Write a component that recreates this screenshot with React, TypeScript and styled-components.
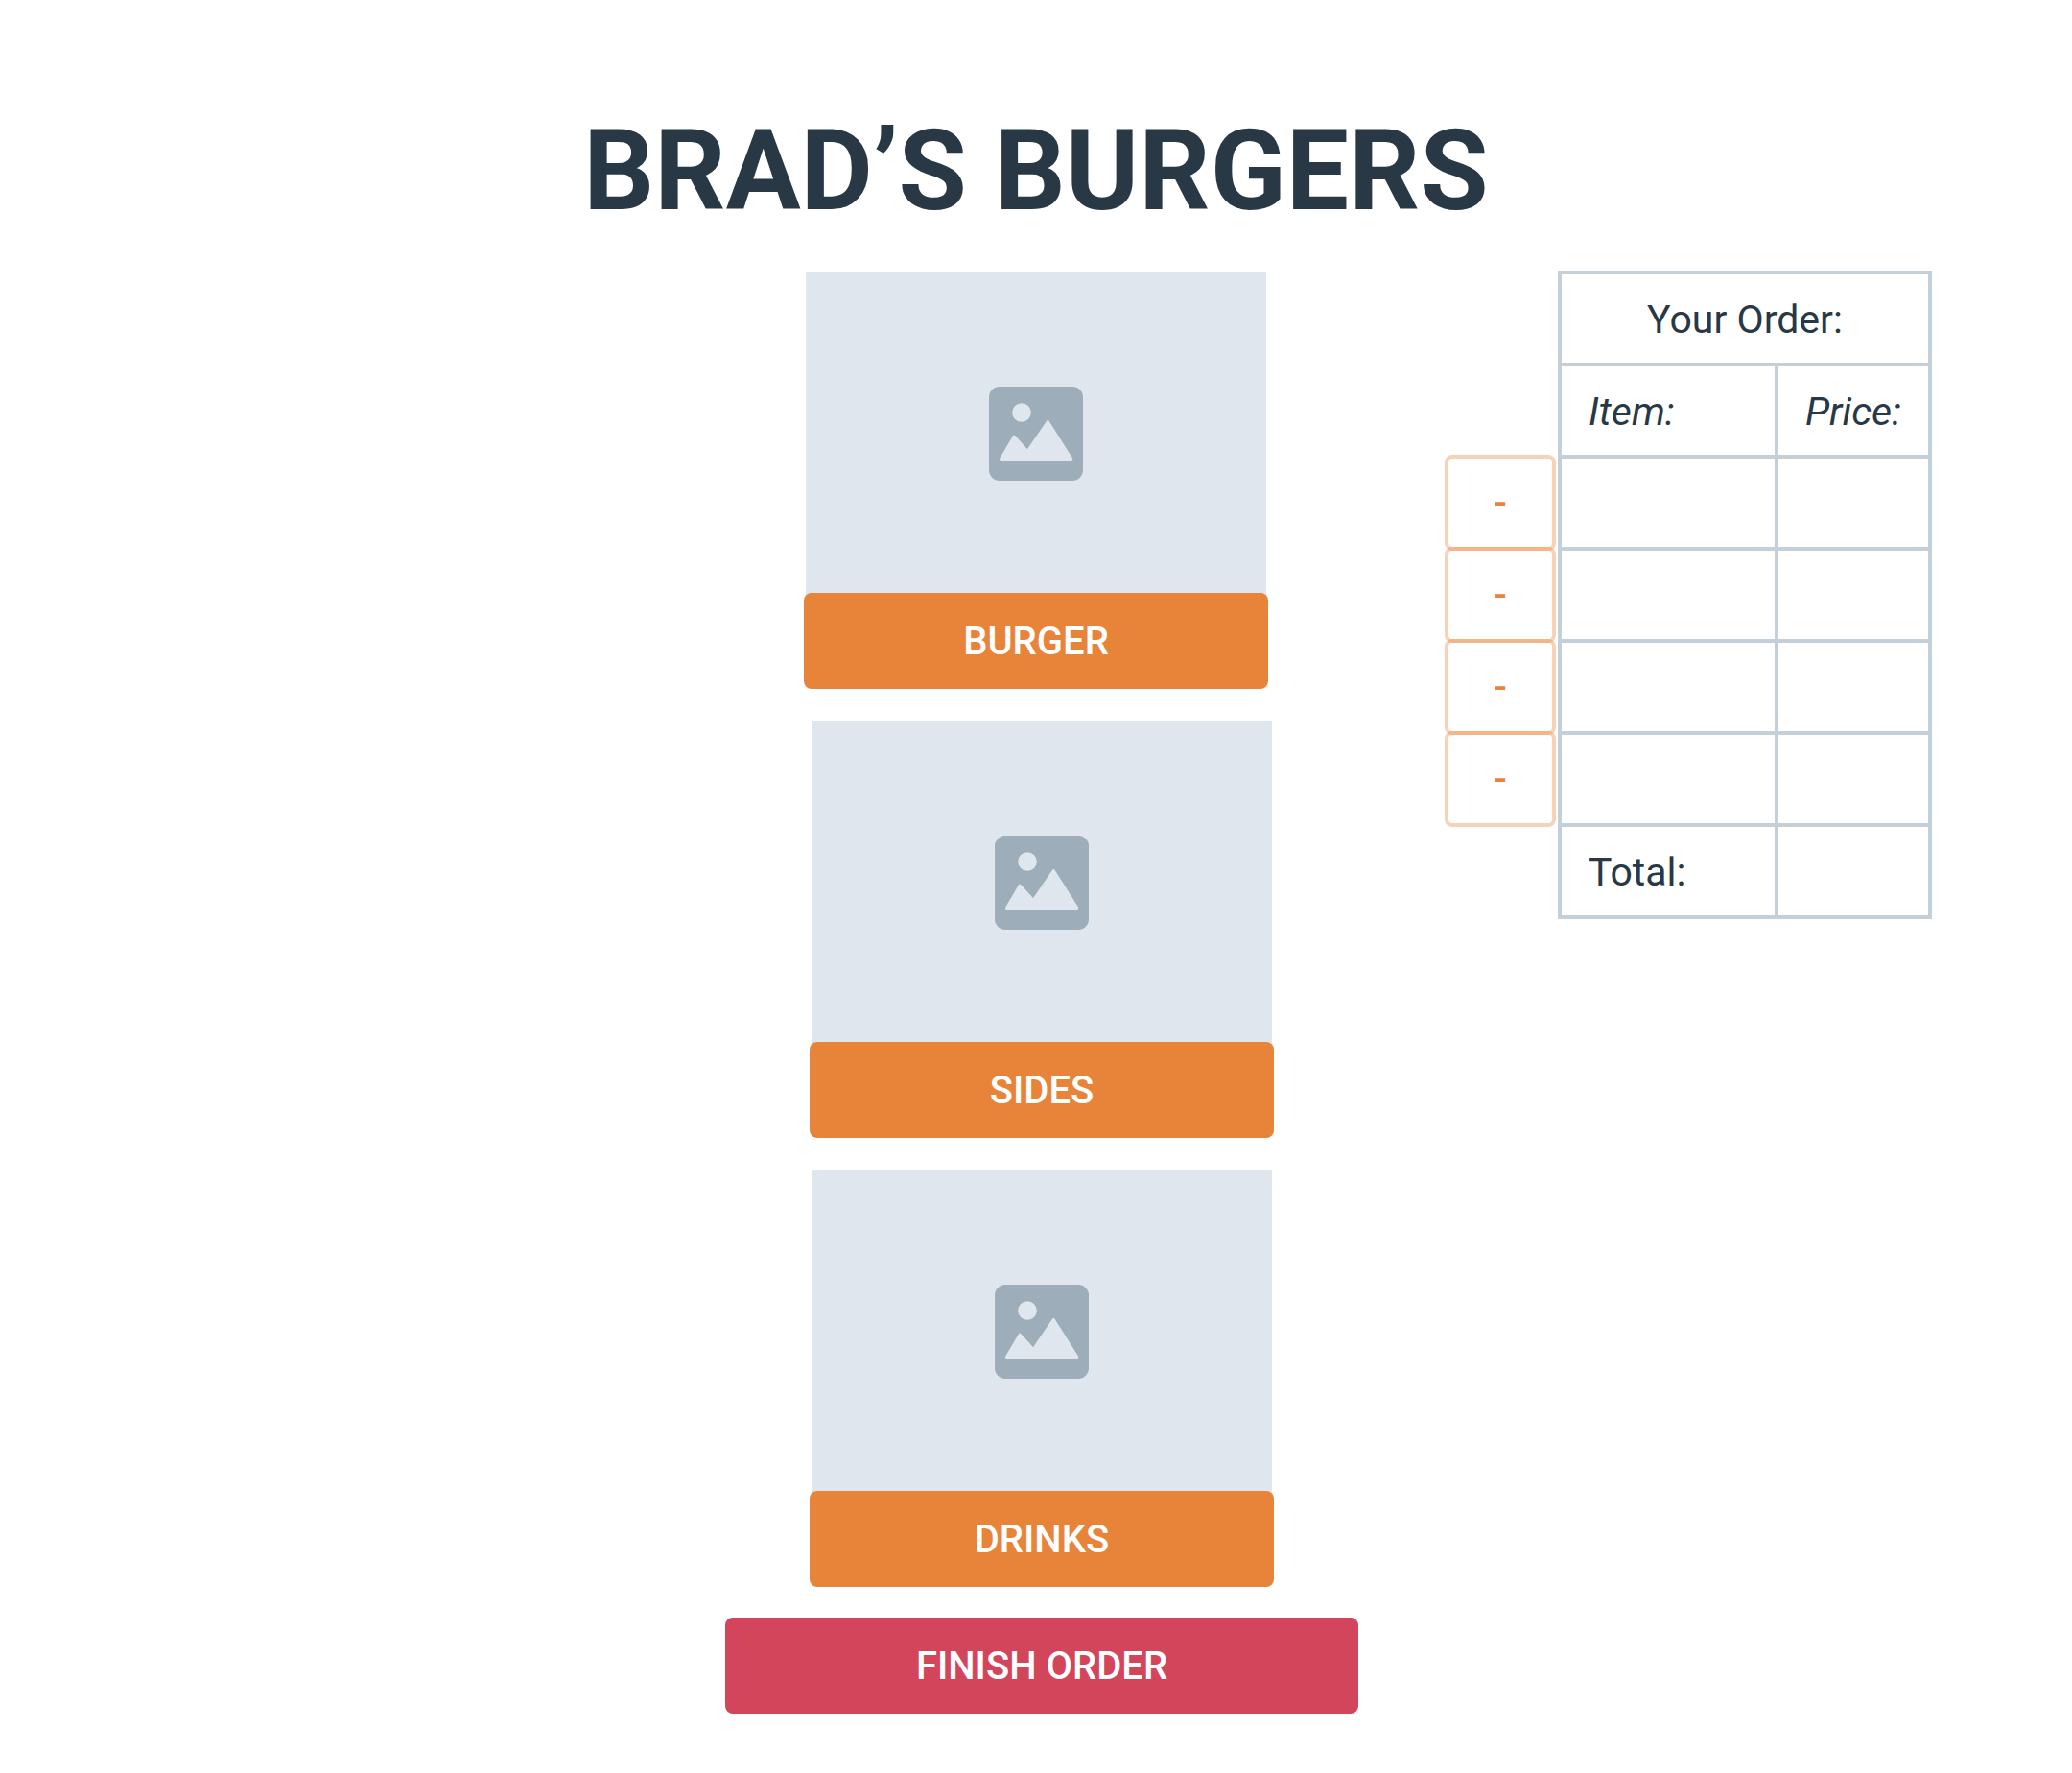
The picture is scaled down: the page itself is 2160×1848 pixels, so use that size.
import React from "react";
import styled, { createGlobalStyle } from "styled-components";

const color = {
  ink: "#283845",
  line: "#c3cfd9",
  placeholder: "#dfe6ee",
  glyph: "#9dadb9",
  orange: "#e8843a",
  orangeSoft: "rgba(232, 132, 58, 0.37)",
  red: "#d3455b",
};

const GlobalStyle = createGlobalStyle`
  *, *::before, *::after { box-sizing: border-box; }
  body {
    margin: 0;
    background: #ffffff;
    color: ${color.ink};
    font-family: Roboto, "Liberation Sans", sans-serif;
    font-size: 40px;
    line-height: 48px;
  }
`;

const Page = styled.div`
  padding: 118px 146px 62px;
`;

const Title = styled.h1`
  margin: 0 0 44px;
  font-size: 116px;
  line-height: 120px;
  font-weight: 700;
  text-align: center;
`;

const Columns = styled.main`
  display: grid;
  grid-template-columns: minmax(0, 1fr) 672px minmax(0, 1fr);
  align-items: start;
`;

const Menu = styled.section`
  grid-column: 2;
  display: flex;
  flex-direction: column;
  align-items: center;
  gap: 32px;
`;

const MoreItems = styled.div`
  width: 100%;
  padding-left: 12px;
  display: flex;
  flex-direction: column;
  align-items: center;
  gap: 32px;
`;

const Card = styled.article`
  width: 484px;
  padding-top: 2px;
  display: flex;
  flex-direction: column;
`;

const Picture = styled.div`
  height: 336px;
  margin: 0 2px -2px;
  display: flex;
  align-items: center;
  justify-content: center;
  background: ${color.placeholder};
`;

const SolidButton = styled.button<{ $tone: string }>`
  width: 100%;
  height: 100px;
  padding: 2px 24px 0;
  border: 0;
  border-radius: 8px;
  background: ${(p) => p.$tone};
  color: #ffffff;
  font: inherit;
  font-weight: 500;
  text-transform: uppercase;
  cursor: pointer;
`;

const Order = styled.aside`
  grid-column: 3;
  justify-self: end;
  display: flex;
  gap: 2px;
`;

const RemoveList = styled.div`
  padding-top: 192px;
  display: flex;
  flex-direction: column;
`;

const RemoveButton = styled.button`
  width: 116px;
  height: 100px;
  padding: 2px 0 0;
  border: 4px solid ${color.orangeSoft};
  border-radius: 8px;
  background: transparent;
  color: ${color.orange};
  font: inherit;
  font-weight: 500;
  cursor: pointer;

  & + & {
    margin-top: -4px;
  }
`;

const OrderTable = styled.table`
  width: 390px;
  table-layout: fixed;
  border-collapse: collapse;
  font-size: 41px;

  tr {
    height: 96px;
  }

  th,
  td {
    padding: 2px 0 0 28px;
    border: 4px solid ${color.line};
    font-weight: 400;
    text-align: left;
  }
`;

const ItemColumn = styled.col`
  width: 226px;
`;

const Heading = styled.th`
  && {
    padding: 2px 0 0;
    text-align: center;
  }
`;

const ColumnLabel = styled.th`
  font-style: italic;
`;

function PictureGlyph() {
  return (
    <svg width="98" height="98" viewBox="0 0 98 98" aria-hidden="true">
      <rect width="98" height="98" rx="11" fill={color.glyph} />
      <circle cx="34" cy="27" r="9.8" fill={color.placeholder} />
      <path
        d="M12.4 75.4 26.2 52 40.2 67.6 61.3 36.6 85.8 75.4Z"
        fill={color.placeholder}
        stroke={color.placeholder}
        strokeWidth="3"
        strokeLinejoin="round"
      />
    </svg>
  );
}

function MenuCard({ name }: { name: string }) {
  return (
    <Card>
      <Picture>
        <PictureGlyph />
      </Picture>
      <SolidButton type="button" $tone={color.orange}>
        {name}
      </SolidButton>
    </Card>
  );
}

const rows = [1, 2, 3, 4];

export default function App() {
  return (
    <>
      <GlobalStyle />
      <Page>
        <Title>BRAD’S BURGERS</Title>
        <Columns>
          <Menu>
            <MenuCard name="Burger" />
            <MoreItems>
              <MenuCard name="Sides" />
              <MenuCard name="Drinks" />
              <SolidButton type="button" $tone={color.red}>
                Finish order
              </SolidButton>
            </MoreItems>
          </Menu>
          <Order>
            <RemoveList>
              {rows.map((row) => (
                <RemoveButton key={row} type="button">
                  -
                </RemoveButton>
              ))}
            </RemoveList>
            <OrderTable>
              <colgroup>
                <ItemColumn />
                <col />
              </colgroup>
              <thead>
                <tr>
                  <Heading colSpan={2}>Your Order:</Heading>
                </tr>
                <tr>
                  <ColumnLabel scope="col">Item:</ColumnLabel>
                  <ColumnLabel scope="col">Price:</ColumnLabel>
                </tr>
              </thead>
              <tbody>
                {rows.map((row) => (
                  <tr key={row}>
                    <td />
                    <td />
                  </tr>
                ))}
              </tbody>
              <tfoot>
                <tr>
                  <th scope="row">Total:</th>
                  <td />
                </tr>
              </tfoot>
            </OrderTable>
          </Order>
        </Columns>
      </Page>
    </>
  );
}
